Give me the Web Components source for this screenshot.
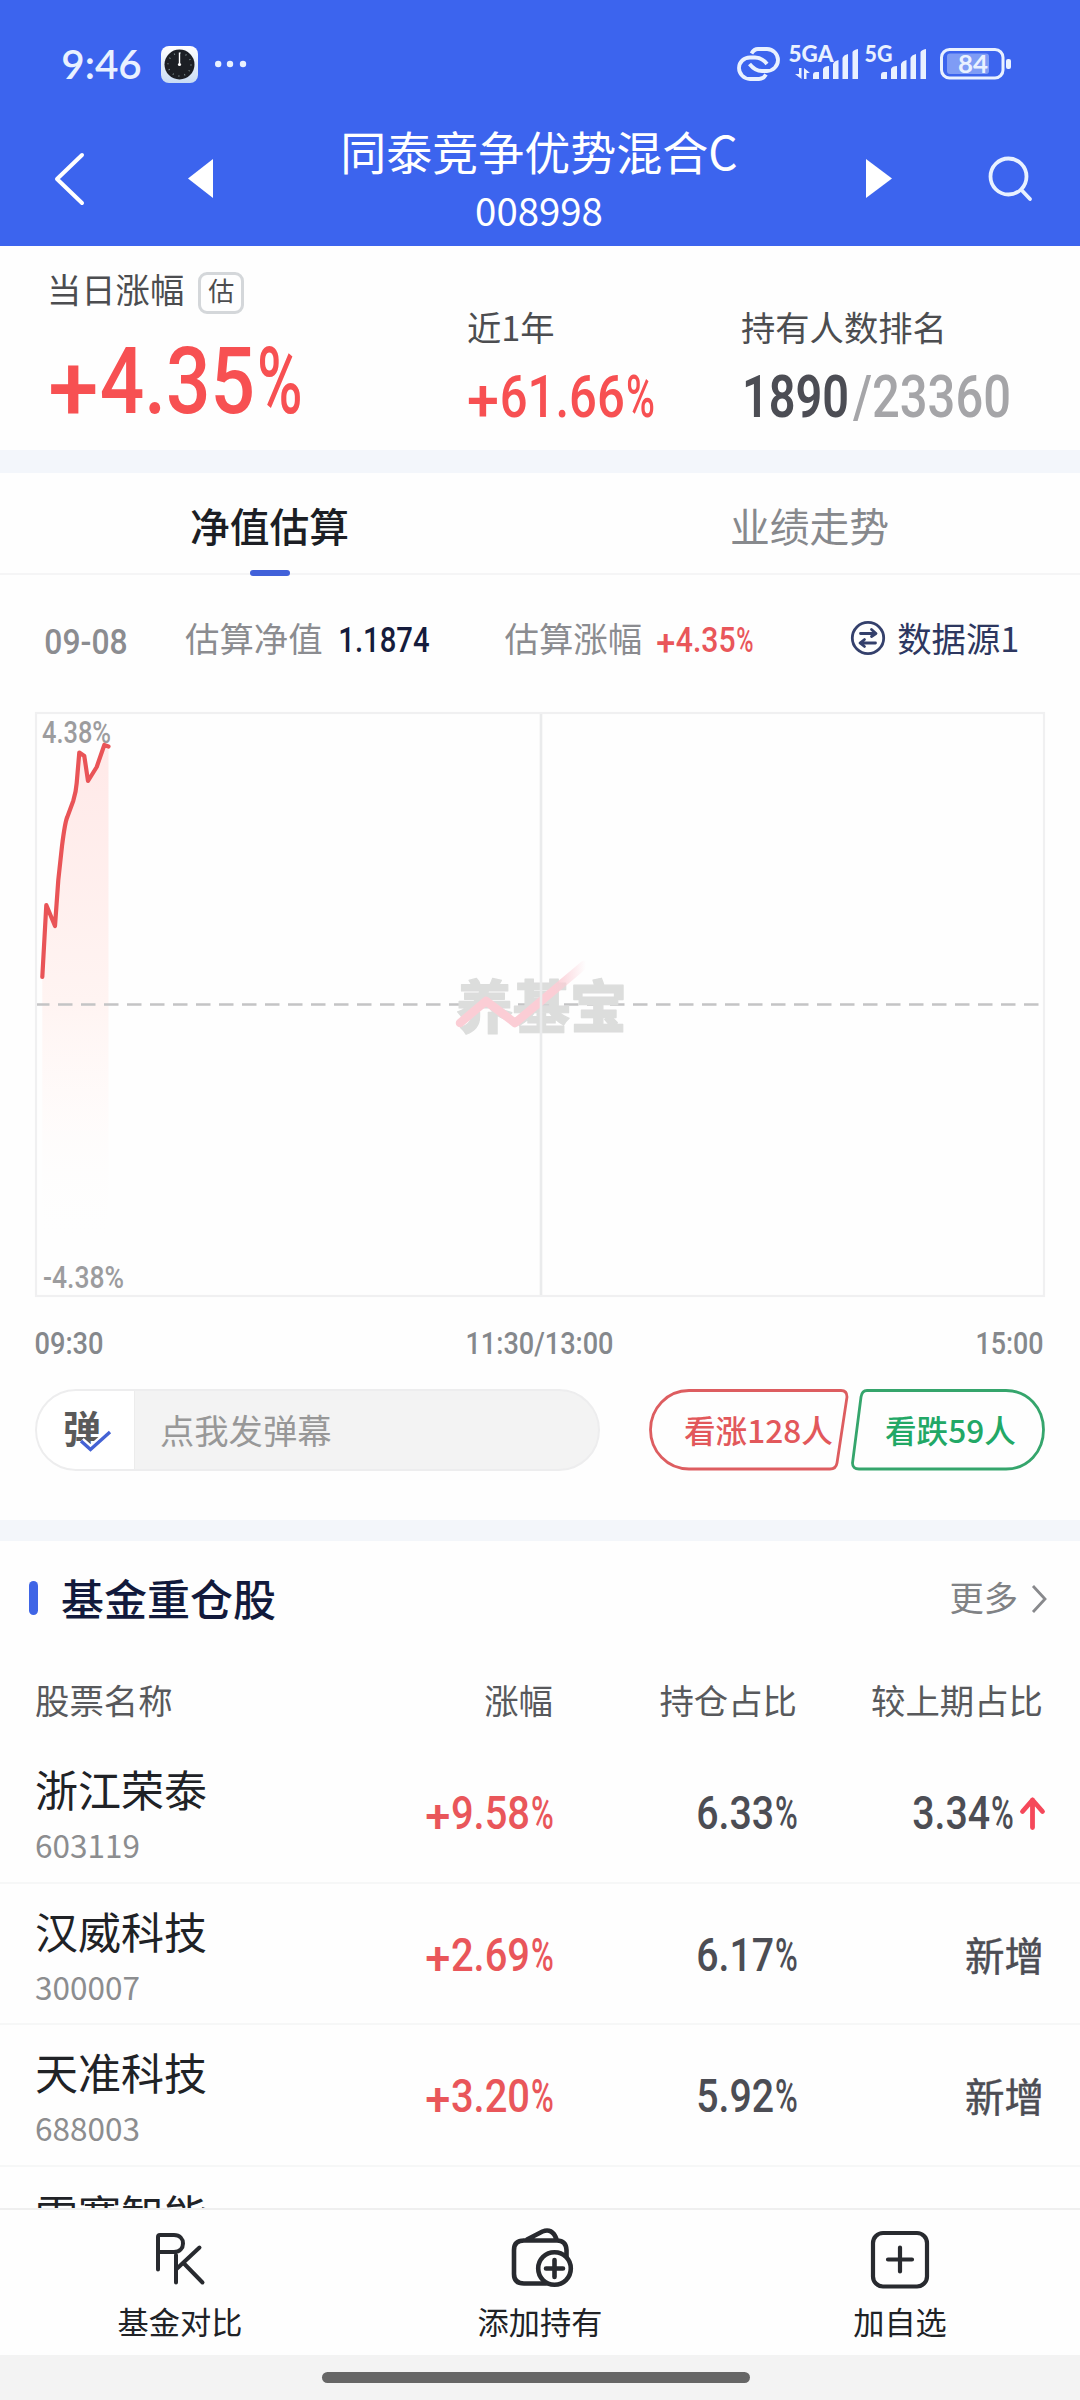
<!DOCTYPE html>
<html lang="zh-CN">
<head>
<meta charset="utf-8">
<title>同泰竞争优势混合C</title>
<style>
html,body{margin:0;padding:0}
body{width:1080px;height:2400px;overflow:hidden;background:#fefefe;font-family:"Noto Sans CJK SC",sans-serif;color:#4c4d50}
</style>
</head>
<body>
<fund-page></fund-page>
<script>
const base = '<style>*{box-sizing:border-box}:host{display:block}svg{display:block;overflow:visible;flex:none}span,.t{line-height:1;white-space:nowrap;display:block;flex:none}</style>';
function define(name, html, setup){
  customElements.define(name, class extends HTMLElement{
    connectedCallback(){
      if(this.shadowRoot) return;
      this.attachShadow({mode:'open'}).innerHTML = base + (typeof html === 'function' ? html(this) : html);
      if(setup) setup(this);
    }
  });
}

/* Narrow figures: w is the drawn width, h the digit height.
   A leading plus sits on the baseline and a trailing percent sign is drawn slim.
   Each part is scaled horizontally from its natural advance to its slot. */
define('num-text', el => {
  const w = +el.getAttribute('w'), h = +el.getAttribute('h'), s = h/.711;
  const v = el.getAttribute('v');
  const wt = el.getAttribute('wt') || 500, font = el.getAttribute('font') || 'Roboto';
  const plus = v[0] === '+', pct = v.endsWith('%'), b = s*.018;
  const x0 = plus ? h*.78 : 0, x1 = pct ? w-h*.72 : w;
  const part = (t, x, y, len) => `<text data-x="${x-b}" data-y="${y}" data-w="${len+b*2}">${t}</text>`;
  return `<style>:host{flex:none;width:${w}px;height:${h}px}text{font-family:${font},"Noto Sans",sans-serif;font-weight:${wt};font-size:${s}px;fill:currentColor}</style>
  <svg width="${w}" height="${h}">${plus ? part('+', 0, h*1.1, h*.71) : ''}${part(v.slice(plus?1:0, pct?-1:undefined), x0, h, x1-x0)}${pct ? part('%', w-h*.64, h, h*.64) : ''}</svg>`;
}, el => {
  for(const t of el.shadowRoot.querySelectorAll('text')){
    const k = t.dataset.w / t.getComputedTextLength();
    t.setAttribute('transform', `translate(${t.dataset.x} ${t.dataset.y}) scale(${k} 1)`);
  }
});

define('signal-bars', `<style>:host{flex:none}</style><svg width="46" height="31" fill="#e9f1ff">
<path d="M0 30v-4q0-3 3-3h3v7zM10 30v-10q1-3 6-3v13zM20 30v-15q1-3 5.500-4v19zM29.500 30v-21q1-3 5.500-4v25zM39.500 30v-27q1-2 5.500-3v30z"/></svg>`);

define('status-bar', `<style>
:host{height:123px;padding:46px 69px 0 62px;color:#e9f1ff}
.r{display:flex;align-items:flex-start}
</style>
<div class="r">
 <num-text style="margin-top:4px" w="79" h="29" wt="600" font="Lato" v="9:46"></num-text>
 <svg style="margin-left:20px" width="37" height="37"><defs><linearGradient id="g" x2="0" y2="1"><stop stop-color="#fff"/><stop offset="1" stop-color="#c9dcf4"/></linearGradient></defs><rect width="37" height="37" rx="8" fill="url(#g)"/><circle cx="18.500" cy="18.500" r="15" fill="#1c1f24"/><circle cx="18.500" cy="18.500" r="11.500" fill="none" stroke="#788" stroke-width="1.500" stroke-dasharray="1 5.020"/><path d="M18.500 18V6.500" stroke="#fff" stroke-width="1.400"/><circle cx="18.500" cy="18.500" r="1.600" fill="#fff"/></svg>
 <svg style="margin-left:17px" width="32" height="37" fill="#e9f1ff"><circle cx="3.200" cy="18" r="3.200"/><circle cx="15" cy="18" r="3.200"/><circle cx="28" cy="18" r="3.200"/></svg>
 <svg style="margin-left:490px" width="43" height="36" fill="none" stroke="#e9f1ff" stroke-width="3.800"><path d="M14.500 7.500Q17 3 21 3H30C36 3 41 8 41 14S36 25 30 25H25Q18 25 12.500 18"/><path d="M29 28.500Q26.500 33 22 33H13C7 33 2 28 2 22S7 11.500 13 11.500H18Q25 11.500 30 18"/></svg>
 <num-text style="margin-left:9px" w="44" h="16" wt="900" font="Lato" v="5GA"></num-text>
 <svg style="margin:22px 0 0 -38px" width="15" height="12" fill="#e9f1ff"><path d="M4 0h2.500v11L0 6h4zM9 11h2.500V5H15L9 0z"/></svg>
 <signal-bars style="margin:3px 0 0 3px"></signal-bars>
 <num-text style="margin-left:6px" w="27" h="16" wt="900" font="Lato" v="5G"></num-text>
 <signal-bars style="margin:3px 0 0 -11px"></signal-bars>
 <svg style="margin:2px 0 0 13px" width="72" height="32"><rect x="1.500" y="1.500" width="61.500" height="28.500" rx="8" fill="none" stroke="#e9f1ff" stroke-width="3"/><rect x="7" y="5.500" width="42" height="20.500" rx="3" fill="#7f9cf5"/><rect x="66" y="11" width="5" height="10" rx="2" fill="#e9f1ff"/><text x="18" y="25" font-family="Lato" font-size="25" font-weight="700" fill="#e9f1ff" textLength="30" lengthAdjust="spacingAndGlyphs">84</text></svg>
</div>`);

define('nav-bar', `<style>
:host{height:123px;color:#fff}
.r{display:flex;align-items:flex-start;padding-left:57px}
.c{display:flex;flex-direction:column;align-items:center;width:400px;margin-left:126px}
.n{font-size:46px;margin-top:4px}
.d{font-size:38.400px;margin-top:17px}
</style>
<div class="r">
<svg style="margin-top:32px" width="27" height="50" fill="none" stroke="#fff" stroke-width="4" stroke-linecap="round" stroke-linejoin="round"><path d="M25 0L0 24L25 48"/></svg>
<svg style="margin:36px 0 0 104px" width="25" height="40" fill="#fff"><path d="M25 0V39L0 19.500z"/></svg>
<div class="c"><span class="n"><slot name="name"></slot></span><span class="d"><slot name="code"></slot></span></div>
<svg style="margin:36px 0 0 127px" width="26" height="40" fill="#fff"><path d="M0 0V39L26 19.500z"/></svg>
<svg style="margin:34px 0 0 97px" width="46" height="46" fill="none" stroke="#e8f1ff" stroke-width="3.800" stroke-linecap="round"><circle cx="19.500" cy="19.500" r="18"/><path d="M32.500 33L41 42"/></svg>
</div>`);

define('fund-summary', `<style>
:host{height:227px;border-bottom:23px solid #f3f6fb}
.r{display:flex;padding-left:50px}
.a{width:417px;padding-top:26px}.b{width:274px;padding-top:63px}.c{padding-top:63px}
.l{font-size:34.300px;display:flex;align-items:flex-start}
.g{width:46px;height:42px;border:3px solid #d4d7da;border-radius:9px;margin-left:14px;font-size:26px;text-align:center;line-height:30px}
.red{color:#f75052}.k{display:flex;gap:6px}
</style>
<div class="r">
<div class="a"><div class="l"><span style="margin:-1px 0 0 -3px">当日涨幅</span><span class="g">估</span></div><num-text class="red" style="margin-top:33px" w="251" h="66" wt="500" v="+4.35%"></num-text></div>
<div class="b"><div class="l"><span>近1年</span></div><num-text class="red" style="margin:32px 0 0 1px" w="186" h="42" v="+61.66%"></num-text></div>
<div class="c"><div class="l"><span>持有人数排名</span></div><div class="k" style="margin:32px 0 0 2px"><num-text w="105" h="42" wt="600" style="color:#4c4d54" v="1890"></num-text><num-text w="156" h="42" style="color:#a5a5a8" v="/23360"></num-text></div></div>
</div>`);

define('tab-strip', `<style>
:host{height:104px}
.r{display:grid;grid-template-columns:1fr 1fr;height:102px;border-bottom:2px solid #f5f5f6}
.t{text-align:center;font-size:39.800px;padding:32px 1px 0 0;color:#87898d;height:104px}
.on{color:#1c1e24;font-weight:500}
.on::after{content:"";display:block;width:40px;height:6px;border-radius:3px;background:#4161d9;margin:25px auto 0}
</style><div class="r"><div class="t on">净值估算</div><div class="t">业绩走势</div></div>`);

define('estimate-line', `<style>
:host{height:133px}
.r{display:flex;padding:46px 0 0 45px;align-items:flex-start;color:#8b8c90;font-size:34.400px}
.s{color:#2d3760}
</style><div class="r">
<num-text style="margin-top:6px" w="82" h="25" v="09-08"></num-text>
<span style="margin-left:58px;margin-top:-3px">估算净值</span>
<num-text style="margin:4px 0 0 16px;color:#151c3c" w="90" h="25" v="1.1874"></num-text>
<span style="margin-left:76px;margin-top:-3px">估算涨幅</span>
<num-text style="margin:4px 0 0 15px;color:#e9565a" w="96" h="25" v="+4.35%"></num-text>
<svg style="margin:-2px 0 0 98px" width="34" height="34" fill="none" stroke="#34406c" stroke-width="2.800" stroke-linecap="round" stroke-linejoin="round"><circle cx="17" cy="17" r="15.700"/><path d="M9.500 12.500H25L20.500 8.500M25 12.500l-4.500 3M24.500 22H9L13.500 18.500M9 22l4.500 3.500"/></svg>
<span class="s" style="margin-left:12px;margin-top:-3px">数据源1</span>
</div>`);

define('intraday-chart', `<style>
:host{height:678px;padding:0 35px}
.lb{font-family:Roboto,sans-serif;font-weight:500;fill:#9c9c9e;font-size:30.500px}
.wm{font-family:"Noto Sans CJK SC";font-weight:900;font-size:57px;fill:#dcdddc;stroke:#dcdddc;stroke-width:1.200;stroke-linejoin:round}
.x{display:flex;justify-content:space-between;color:#85888c;margin-top:24px;padding:0 2px 0 0}
</style>
<svg width="1010" height="598" viewBox="35 710 1010 598">
<defs><linearGradient id="f" x1="0" y1="745" x2="0" y2="1260" gradientUnits="userSpaceOnUse"><stop stop-color="#ffe9e8"/><stop offset=".5" stop-color="#fff4f2"/><stop offset="1" stop-color="#fff" stop-opacity="0"/></linearGradient>
<linearGradient id="z" x1="458" y1="0" x2="586" y2="0" gradientUnits="userSpaceOnUse"><stop stop-color="#fbcdd5"/><stop offset=".75" stop-color="#fbcdd5"/><stop offset="1" stop-color="#fbcdd5" stop-opacity="0"/></linearGradient></defs>
<rect x="36" y="713" width="1008" height="583" fill="none" stroke="#f0f0f1" stroke-width="2.200"/>
<path d="M42.300 978.600L46.300 904.300L55 927L58.300 880L62 846L67.300 817L73.300 800.700L76.700 783L79.300 752.500L84.300 756L88 781.700L96.700 767L104.300 744.500L108.500 746V1260H42.300z" fill="url(#f)"/>
<path d="M37 1004.500H1041" stroke="#c4c4c5" stroke-width="2.400" stroke-dasharray="14.500 8.500" stroke-dashoffset="2"/>
<text class="wm" x="456" y="1028">养基宝</text>
<path d="M460 1023L486 1001L515 1023L584 965" fill="none" stroke="url(#z)" stroke-width="8.500" stroke-linejoin="round" stroke-linecap="round"/>
<path d="M541 714V1295" stroke="#eaebec" stroke-width="2.600"/>
<text class="lb" x="42" y="743" textLength="69" lengthAdjust="spacingAndGlyphs">4.38%</text>
<text class="lb" x="43" y="1288" textLength="81" lengthAdjust="spacingAndGlyphs">-4.38%</text>
<path d="M42.300 977L46.300 905L55 926L58.300 880L62 846Q65 822 67.300 817L73.300 800.700Q76 792 76.700 783L79.300 752.500L84.300 756L88 781L96.700 767L104.300 745L108.500 746.500" fill="none" stroke="#e95457" stroke-width="4.200" stroke-linejoin="round" stroke-linecap="round"/>
</svg>
<div class="x"><num-text w="68" h="22" v="09:30"></num-text><num-text w="147" h="22" v="11:30/13:00"></num-text><num-text w="67" h="22" v="15:00"></num-text></div>`);

define('vote-pill', el => {
  const up = el.hasAttribute('up');
  const d = up ? 'M40 1.500H192Q198 1.500 198 8L188 74Q187 80 181 80H40C18 80 1.500 62 1.500 40.750S18 1.500 40 1.500z'
               : 'M16 1.500H155C177 1.500 192.500 19 192.500 40.750S177 80 155 80H8Q1.500 80 1.500 74L10 8Q11 1.500 16 1.500z';
  return `<style>:host{flex:none;display:grid;width:${up?200:194}px;height:82px;color:${up?'#e2585b':'#22a866'}}svg,.t{grid-area:1/1}.t{font-size:31.600px;font-weight:500;padding:25px 0 0 ${up?35:34}px;}</style>
  <svg width="200" height="82" fill="none" stroke="${up?'#dd5d60':'#35a56c'}" stroke-width="2.800"><path d="${d}"/></svg><div class="t"><slot></slot></div>`;
});

define('danmu-bar', `<style>
:host{height:153px;border-bottom:21px solid #f3f6fa}
.r{display:flex;padding:1px 0 0 35px;align-items:flex-start}
.p{display:flex;width:565px;height:82px;border-radius:41px;border:2px solid #ededee;overflow:hidden;background:#f3f3f3}
.d{width:98px;background:#fff;display:grid;border-right:1px solid #ececec}
.d>*{grid-area:1/1}
.d span{font-size:38px;font-weight:700;color:#5a5a5a;margin:17px 0 0 26px}
.q{font-size:34.300px;color:#989898;margin:21px 0 0 25px}
</style><div class="r">
<div class="p"><div class="d"><span>弹</span><svg width="98" height="78" fill="none" stroke-linejoin="miter"><path d="M44 50L53.500 58.500L73 41" stroke="#fff" stroke-width="8"/><path d="M44 50L53.500 58.500L73 41" stroke="#4462d4" stroke-width="3.400"/></svg></div><span class="q">点我发弹幕</span></div>
<vote-pill up style="margin-left:49px">看涨128人</vote-pill><vote-pill style="margin-left:2px">看跌59人</vote-pill>
</div>`);

define('section-head', `<style>
:host{height:118px}
.r{display:flex;align-items:flex-start;padding:40px 32px 0 29px}
i{width:9px;height:34px;border-radius:4.500px;background:#3f65e6;flex:none}
.h{font-size:43px;font-weight:500;color:#121a3c;margin:-5px auto 0 23px}
.m{font-size:34.300px;color:#808285;margin-top:-2px}
</style><div class="r"><i></i><span class="h"><slot></slot></span><span class="m">更多</span>
<svg style="margin:5px 1px 0 14px" width="15" height="26" fill="none" stroke="#88898c" stroke-width="2.800"><path d="M1 0L13 13L1 26"/></svg></div>`);

define('table-head', `<style>
:host{height:83px}
.r{display:grid;grid-template-columns:318px 200px 244px 246px;padding:23px 0 0 35px;font-size:34.400px;color:#58595c}
.r span{text-align:right}.r span:first-child{text-align:left}
</style><div class="r"><span>股票名称</span><span>涨幅</span><span>持仓占比</span><span>较上期占比</span></div>`);

define('stock-row', el => {
  const n = el.getAttribute('chg'), p = el.getAttribute('pos'), d = el.getAttribute('diff');
  const last = !d ? '' : d === '新增' ? '<span class="nw">新增</span>' :
   `<num-text w="100" h="33" v="${d}"></num-text><svg style="margin:1px 0 0 7px" width="25" height="33" fill="none" stroke="#f5485a" stroke-width="4.800" stroke-linecap="round" stroke-linejoin="round"><path d="M2.500 14.500L12.500 3L22.500 14.500M12.500 3V30.500"/></svg>`;
  return `<style>
  :host{height:141.700px;border-bottom:2px solid #f6f7f7}
  .r{display:grid;grid-template-columns:318px 200px 244px 248px;padding-left:35px}
  .n{font-size:43px;color:#202226;margin-top:25px}
  .k{font-size:31.500px;color:#8c8d8f;margin-top:19px}
  .v{display:flex;justify-content:flex-end;padding-top:54px;color:#4c4d54}
  .red{color:#e9565a}
  .nw{font-size:39.500px;margin-top:-4px;padding-right:1px;-webkit-text-stroke:.5px}
  </style><div class="r"><div><span class="n"><slot></slot></span><span class="k">${el.getAttribute('code')||''}</span></div>
  <div class="v red">${n?`<num-text w="127" h="33" v="${n}"></num-text>`:''}</div>
  <div class="v">${p?`<num-text w="100" h="33" v="${p}"></num-text>`:''}</div>
  <div class="v">${last}</div></div>`;
});

define('stock-list', `<style>:host{height:466px;overflow:hidden}</style><slot></slot>`);

define('action-item', `<style>:host{display:flex;flex-direction:column;align-items:center}.t{font-size:31.200px;color:#202226;margin-top:13px}</style><slot name="icon"></slot><div class="t"><slot></slot></div>`);

define('action-bar', `<style>
:host{height:192px;border-top:2px solid #efefef;background:#fefefe}
.r{display:grid;grid-template-columns:repeat(3,1fr);height:145px;padding-top:16px}
.h{height:45px;background:#f3f3f3;padding-top:17px}
.h i{display:block;width:428px;height:11px;border-radius:5.500px;background:#666;margin:0 auto 0 322px}
svg{fill:none;stroke:#282a2f;stroke-linecap:round;stroke-linejoin:round}
</style><div class="r">
<action-item><svg slot="icon" width="64" height="66" viewBox="0 0 64 66" stroke-width="4"><path d="M10 43.500V11Q10 9 12 9H26C32 9 35 13 35 17.500S32 26 26 26H10M28 29V56.500M51.500 21.500L28.500 43M36 37.500L54.500 56.500"/></svg>基金对比</action-item>
<action-item><svg slot="icon" width="64" height="66" viewBox="0 0 64 66" stroke-width="4.600"><path d="M15 14.500H49Q58 14.500 58.500 24V31M38 57.500H16Q6 57.500 6 48V24Q6 14.500 16 14.500M19 13.500L34.500 5.500Q44 1.500 48.500 13"/><circle cx="46.500" cy="42.500" r="16.300" fill="#fefefe"/><path d="M38 42.500H55M46.500 34V51"/></svg>添加持有</action-item>
<action-item><svg slot="icon" width="64" height="66" viewBox="0 0 64 66" stroke-width="4.200"><rect x="5" y="7" width="54" height="53.500" rx="10"/><path d="M20 33.500H44M32 21.500V45.500"/></svg>加自选</action-item>
</div><div class="h"><i></i></div>`);

define('fund-page', `<style>:host{width:1080px;height:2400px;overflow:hidden}header{background:#3c64ee}</style>
<header><status-bar></status-bar><nav-bar><b slot="name" style="font-weight:400">同泰竞争优势混合C</b><b slot="code" style="font-weight:400">008998</b></nav-bar></header>
<fund-summary></fund-summary><tab-strip></tab-strip><estimate-line></estimate-line>
<intraday-chart></intraday-chart><danmu-bar></danmu-bar>
<section-head>基金重仓股</section-head><table-head></table-head>
<stock-list>
<stock-row code="603119" chg="+9.58%" pos="6.33%" diff="3.34%">浙江荣泰</stock-row>
<stock-row code="300007" chg="+2.69%" pos="6.17%" diff="新增">汉威科技</stock-row>
<stock-row code="688003" chg="+3.20%" pos="5.92%" diff="新增">天准科技</stock-row>
<stock-row>雷赛智能</stock-row>
</stock-list>
<action-bar></action-bar>`);
</script>
</body>
</html>
